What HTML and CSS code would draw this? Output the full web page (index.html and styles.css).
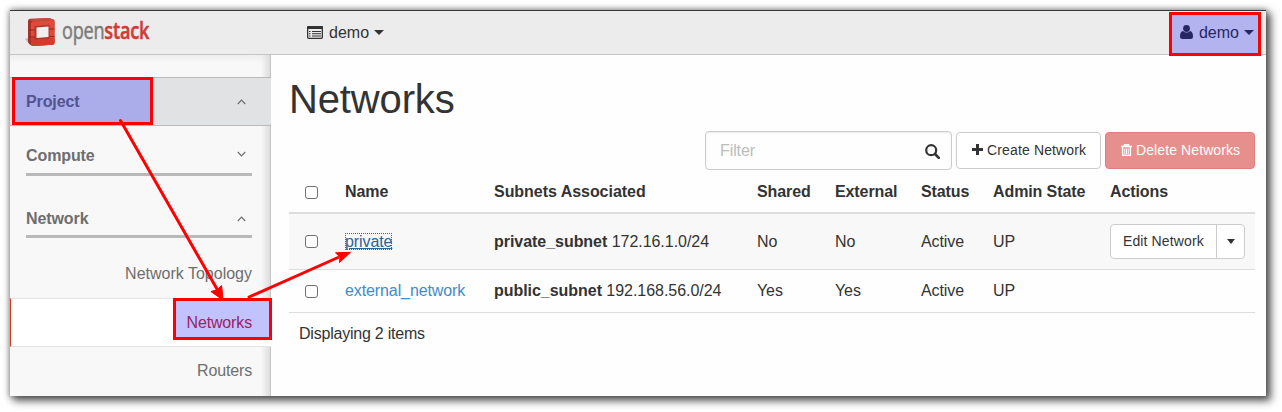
FILE: index.html
```html
<!DOCTYPE html>
<html lang="en">
<head>
<meta charset="utf-8">
<title>Networks - OpenStack Dashboard</title>
<link rel="stylesheet" href="styles.css">
</head>
<body>
<div class="window">
  <header class="topbar">
    <div class="brand">
      <svg class="brand-mark" width="31" height="30" viewBox="0 0 31 30">
        <path d="M0 21L5 19V27Z" fill="#bbb"/>
        <path d="M3 3Q3 1 5 .8L24 0L29.500 2V25Q29.500 26.500 27 26.700L9 28Q5 28 3 24Z" fill="#a83228"/>
        <path d="M4 1.500L24 0L29 2L8 3.500Z" fill="#c84a3e"/>
        <path d="M6 5Q6 3.500 8 3.400L27 2Q29.500 2 29.500 4V25Q29.500 26.500 27 26.700L8 28Q6 28 6 26Z" fill="#e2493a"/>
        <path d="M6 20H29.500V25Q29.500 26.500 27 26.700L8 28Q6 28 6 26Z" fill="#d8392a"/>
        <path d="M3.500 12H10M3.500 19H10M24 11H29.500M24 18.500H29.500" stroke="#8e2820"/>
        <path d="M9.500 8L24.500 7V20.500L9.500 21.500Z" fill="#b0352b"/>
        <path d="M11.500 9.500L23.500 8.500V19L11.500 20Z" fill="#f1efef"/>
      </svg>
      <span class="brand-text">open<b>stack</b></span>
    </div>
    <div class="menu">
      <svg width="16" height="13" viewBox="0 0 16 13"><rect x=".65" y=".65" width="14.7" height="11.7" rx="1" fill="none" stroke="#333" stroke-width="1.3"/><path d="M0 1Q0 0 1 0H15Q16 0 16 1V3H0Z" fill="#333"/><path d="M2 5.500H3.500M5 5.500H14M2 7.700H3.500M5 7.700H14M2 10H3.500M5 10H14" stroke="#333"/></svg>
      <span>demo</span><i class="caret"></i>
    </div>
    <div class="menu user">
      <svg width="13" height="14" viewBox="0 0 13 14" fill="#333"><circle cx="6.5" cy="3.5" r="3.4"/><path d="M3 6Q0 6.500 0 11.500Q0 14 2.500 14H10.500Q13 14 13 11.500Q13 6.500 10 6Q6.500 9 3 6Z"/></svg>
      <span>demo</span><i class="caret"></i>
    </div>
  </header>
  <div class="body">
    <nav class="sidebar">
      <div class="project"><span>Project</span><svg class="chev" viewBox="0 0 9 6"><path d="M.8 5L4.500 1.200L8.200 5"/></svg></div>
      <div class="group"><span>Compute</span><svg class="chev up" viewBox="0 0 9 6"><path d="M.8 1L4.500 4.800L8.200 1"/></svg></div>
      <div class="group second"><span>Network</span><svg class="chev" viewBox="0 0 9 6"><path d="M.8 5L4.500 1.200L8.200 5"/></svg></div>
      <div class="item first">Network Topology</div>
      <div class="item active">Networks</div>
      <div class="item">Routers</div>
    </nav>
    <main class="content">
      <h1>Networks</h1>
      <div class="actions">
        <div class="filter"><span>Filter</span><svg width="15" height="15" viewBox="0 0 15 15"><circle cx="6.2" cy="6.2" r="5" fill="none" stroke="#333" stroke-width="2.2"/><path d="M10 10L13.800 13.800" stroke="#333" stroke-width="2.6" stroke-linecap="round"/></svg></div>
        <div class="btn create"><svg width="11" height="11" viewBox="0 0 11 11"><path d="M5.500 0V11M0 5.500H11" stroke="#333" stroke-width="3"/></svg><span>Create Network</span></div>
        <div class="btn danger"><svg width="11" height="12" viewBox="0 0 11 12" fill="none" stroke="#fff"><path d="M0 2.500H11M3.500 2.500V.7H7.500V2.500" stroke-width="1.4"/><path d="M1.600 3V11.300H9.400V3" stroke-width="1.4"/><path d="M3.800 4.500V10M5.500 4.500V10M7.200 4.500V10"/></svg><span>Delete Networks</span></div>
      </div>
      <table class="grid">
        <colgroup><col class="c-check"><col class="c-name"><col class="c-subnet"><col class="c-shared"><col class="c-external"><col class="c-status"><col class="c-admin"><col></colgroup>
        <thead>
          <tr><th><i class="check"></i></th><th>Name</th><th class="wide">Subnets Associated</th><th>Shared</th><th>External</th><th>Status</th><th>Admin State</th><th>Actions</th></tr>
        </thead>
        <tbody>
          <tr class="row-one"><td><i class="check"></i></td><td><a class="link focused">private</a></td><td class="wide"><b>private_subnet</b> 172.16.1.0/24</td><td>No</td><td>No</td><td>Active</td><td>UP</td><td><div class="split"><span class="edit">Edit Network</span><span class="drop"><i class="caret small"></i></span></div></td></tr>
          <tr class="row-two"><td><i class="check"></i></td><td><a class="link">external_network</a></td><td class="wide"><b>public_subnet</b> 192.168.56.0/24</td><td>Yes</td><td>Yes</td><td>Active</td><td>UP</td><td></td></tr>
        </tbody>
      </table>
      <div class="count">Displaying 2 items</div>
    </main>
  </div>
  <div class="mark mark-project"></div>
  <div class="mark mark-networks"></div>
  <div class="mark mark-user"></div>
  <svg class="arrows" width="1256" height="386" viewBox="10 10 1256 386">
    <path d="M120.500 120.500L217 289M249 297L338 257.500" stroke="#f00" stroke-width="3" stroke-linecap="round"/>
    <path d="M223 300L210.500 291.500L216.500 289.500L221.500 285.500L222 286Z" fill="#f00"/>
    <path d="M223 300L211 291.500L217 290L221.500 285.500Z" fill="#f00" stroke="#f00"/>
    <path d="M350.500 252.300L339.500 262.500L340 257L335.500 252.800Z" fill="#f00" stroke="#f00"/>
  </svg>
</div>
</body>
</html>
```
FILE: styles.css
```css
* { box-sizing: border-box; }
body { margin: 0; height: 412px; padding: 10px; background: #fff; color: #333; font: 16px/20px "Liberation Sans", Arial, sans-serif; letter-spacing: -.1px; overflow: hidden; }
svg { display: block; flex: none; }
.window { position: relative; width: 1256px; height: 386px; background: #fefefe; box-shadow: 4px 4px 8px 1px rgba(0,0,0,.6), 0 0 6px 1px rgba(0,0,0,.35); }
.topbar { display: flex; height: 45px; background: #ececec; border-top: 1px solid #38363a; border-bottom: 1px solid #c5c5c5; }
.brand { display: flex; width: 297px; padding: 7px 0 0 15px; gap: 6px; }
.brand-text { font: 24px/28px "Open Sans", sans-serif; color: #7b7b7b; -webkit-text-stroke: .5px; transform: scaleX(.755); transform-origin: 0 0; height: 28px; margin-top: -2px; letter-spacing: -.3px; }
.brand-text b { color: #d33a35; font-weight: 600; }
.menu { display: flex; align-items: center; height: 44px; gap: 6px; letter-spacing: 0; }
.menu svg { margin-top: -2px; }
.user { margin-left: auto; padding-right: 11px; }
.caret { width: 0; height: 0; border: 5px solid transparent; border-top-color: #333; border-bottom: 0; }
.menu .caret { margin: -1px 0 0 -1px; }
.user .caret { margin-right: 1px; }
.body { display: flex; height: 341px; }
.sidebar { width: 261px; padding-top: 22px; background: linear-gradient(to left, #ddd, rgba(247,247,247,0) 9px), linear-gradient(#eee, #f8f8f8 8px); border-right: 1px solid #c5c5c5; color: #6e6e6e; }
.project, .group { display: flex; justify-content: space-between; align-items: center; font-weight: bold; }
.project { height: 49px; margin-right: -1px; padding: 0 25px 0 16px; background: #e1e2e4; border: solid #bababa; border-width: 1px 0; }
.chev { width: 9px; height: 6px; fill: none; stroke: #6e6e6e; stroke-width: 1.2; }
.chev.up { margin-top: -3px; }
.group { height: 50px; margin: 0 18px 0 16px; padding: 12px 6px 0 0; border-bottom: 3px solid #b9b9b9; }
.group.second { height: 62px; padding-top: 26px; }
.item { height: 49px; padding-right: 18px; text-align: right; line-height: 48px; letter-spacing: -.15px; }
.item.first { height: 60px; line-height: 72px; letter-spacing: 0; }
.active { margin-right: -1px; padding-right: 19px; background: #fff; color: #d12a2f; border: solid #e4e4e4; border-width: 1px 0; border-left: 1px solid #d33a20; }
.content { flex: 1; padding: 20px 11px 0 18px; }
h1 { margin: 0; font-size: 40px; font-weight: normal; line-height: 48px; letter-spacing: -.15px; }
.actions { display: flex; justify-content: flex-end; align-items: center; gap: 4px; height: 39px; margin-top: 8px; }
.filter { display: flex; justify-content: space-between; align-items: center; width: 247px; height: 39px; padding: 0 11px 0 14px; border: 1px solid #ccc; border-radius: 4px; color: #bcbcbc; box-shadow: inset 0 1px 2px rgba(0,0,0,.08); }
.filter svg { margin-top: 2px; }
.btn { display: flex; align-items: center; height: 37px; padding-bottom: 1px; border: 1px solid #ccc; border-radius: 4px; background: #fff; font-size: 14px; }
.btn span { white-space: nowrap; }
.create { width: 145px; padding-left: 15px; gap: 4px; letter-spacing: .14px; }
.create svg { margin-top: -1px; }
.danger { width: 150px; padding-left: 15px; gap: 4px; background: #e78f8c; border-color: #e27d7b; color: #fff; letter-spacing: .1px; }
.grid { width: 966px; table-layout: fixed; border-collapse: separate; border-spacing: 0; }
.c-check { width: 47px; }
.c-name { width: 149px; }
.c-subnet { width: 263px; }
.c-shared { width: 78px; }
.c-external { width: 86px; }
.c-status { width: 72px; }
.c-admin { width: 117px; }
th, td { padding: 0 0 0 9px; text-align: left; white-space: nowrap; border-bottom: 1px solid #ddd; }
th:first-child, td:first-child { padding-left: 16px; }
th { height: 44px; padding-top: 2px; border-bottom: 2px solid #ddd; }
.wide { letter-spacing: -.04px; }
.row-one td { height: 56px; background: #f8f8f8; }
.row-two td { height: 43px; }
.check { display: block; width: 13px; height: 13px; border: 1px solid #707070; border-radius: 3px; background: #fff; }
.row-two .check { margin-top: 1px; }
.link { color: #428bca; }
.focused { color: #2a6496; text-decoration: underline; outline: 1px dotted #2a6496; outline-offset: -1px; }
.split { display: flex; width: 135px; height: 35px; border: 1px solid #ccc; border-radius: 4px; background: #fff; font-size: 14px; line-height: 33px; }
.edit { width: 106px; padding-left: 12px; border-right: 1px solid #ccc; letter-spacing: .12px; }
.drop { display: flex; flex: 1; align-items: center; justify-content: center; }
.caret.small { border-width: 5px 4px 0; }
.count { padding: 11px 0 0 10px; letter-spacing: -.22px; }
.mark { position: absolute; background: rgba(0,0,255,.24); border: 3px solid #f00; }
.mark-project { left: 2px; top: 67px; width: 141px; height: 48px; }
.mark-networks { left: 163px; top: 288px; width: 99px; height: 42px; }
.mark-user { left: 1159px; top: 2px; width: 92px; height: 44px; }
.arrows { position: absolute; left: 0; top: 0; }
```
